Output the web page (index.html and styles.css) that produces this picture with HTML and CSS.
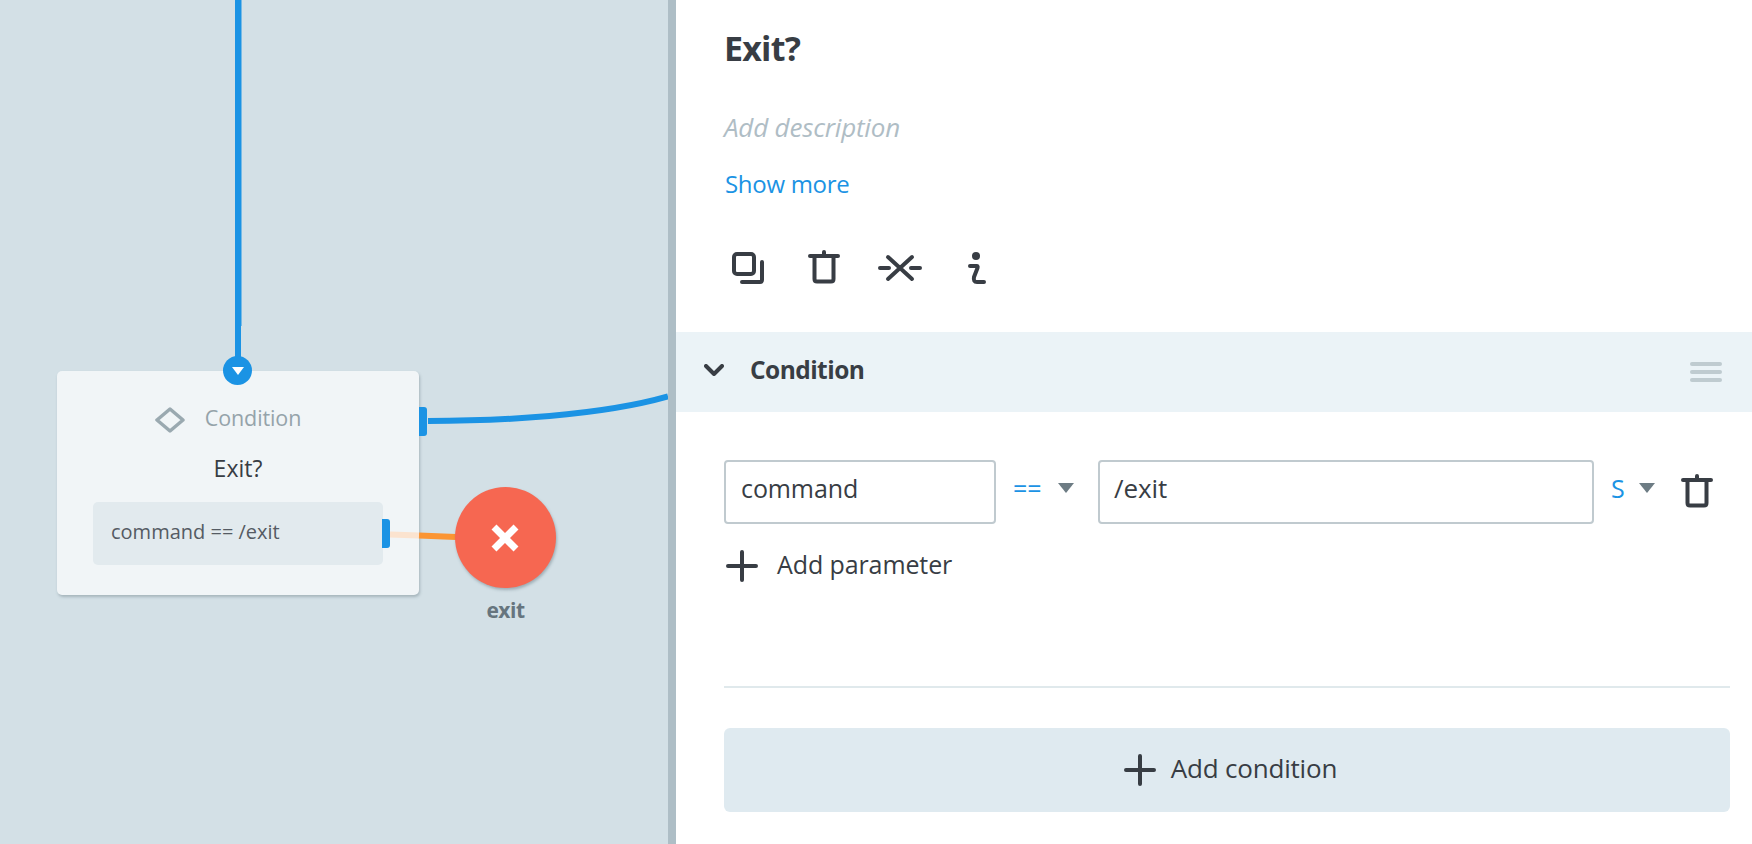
FILE: index.html
```html
<!DOCTYPE html>
<html lang="en">
<head>
<meta charset="utf-8">
<title>Exit?</title>
<link rel="stylesheet" href="styles.css">
</head>
<body>
<div class="app">
  <div class="canvas">
    <div class="node">
      <div class="node-type">
        <svg class="diamond" width="30" height="26" viewBox="0 0 30 26"><path d="M15 2L28 13L15 24L2 13Z"/></svg>
        <span class="node-type-label">Condition</span>
      </div>
      <div class="node-title">Exit?</div>
      <div class="node-row">command == /exit<span class="port port-row"></span></div>
      <span class="port-in"><svg width="12" height="8" viewBox="0 0 12 8"><path d="M0 0H12L6 8Z"/></svg></span>
      <span class="port port-out"></span>
    </div>
    <svg class="wires" width="668" height="844" viewBox="0 0 668 844">
      <path class="wire" d="M238 0V358"/>
      <path class="wire-edge" d="M241.500 0V326"/>
      <path class="wire" d="M428 421C500 421 600 416 668 396.500"/>
      <path class="wire-pale" d="M390 534.500L419 535.500"/>
      <path class="wire-orange" d="M419 535.500L456 537"/>
    </svg>
    <div class="exit-node">
      <div class="exit-circle">
        <svg width="28" height="28" viewBox="0 0 28 28"><path d="M3 3L25 25M25 3L3 25"/></svg>
      </div>
      <div class="exit-label">exit</div>
    </div>
  </div>
  <div class="divider"></div>
  <main class="panel">
    <header class="head">
      <h1 class="title">Exit?</h1>
      <div class="desc">Add description</div>
      <a class="more">Show more</a>
      <div class="tools">
        <svg class="tool tool-copy" width="32" height="32" viewBox="0 0 32 32"><rect x="2" y="2" width="20" height="20" rx="3"/><path d="M30 10V28Q30 30 28 30H10"/></svg>
        <svg class="tool tool-trash" width="32" height="34" viewBox="0 0 32 34"><path d="M2 6H30M16 2V6M6.500 6V29Q6.500 31.500 9 31.500H23Q25.500 31.500 25.500 29V6"/></svg>
        <svg class="tool tool-cut" width="44" height="28" viewBox="0 0 44 28"><path d="M2 14H11M33 14H42M10 3L34 25M34 3L10 25"/></svg>
        <svg class="tool tool-info" width="18" height="32" viewBox="0 0 18 32"><circle class="dot" cx="8" cy="4" r="4"/><path d="M2 14H9Q10 14 9.500 16L6 25Q5 30 9 30H16"/></svg>
      </div>
    </header>
    <section class="band">
      <svg class="chevron" width="20" height="12" viewBox="0 0 20 12"><path d="M2 2L10 10L18 2"/></svg>
      <span class="band-label">Condition</span>
      <span class="burger"><i></i><i></i><i></i></span>
    </section>
    <section class="body">
      <div class="cond-row">
        <div class="field field-a">command</div>
        <div class="op">==</div>
        <span class="caret caret-op"></span>
        <div class="field field-b">/exit</div>
        <div class="type">S</div>
        <span class="caret caret-type"></span>
        <svg class="tool row-trash" width="32" height="34" viewBox="0 0 32 34"><path d="M2 6H30M16 2V6M6.500 6V29Q6.500 31.500 9 31.500H23Q25.500 31.500 25.500 29V6"/></svg>
      </div>
      <div class="add-param">
        <svg class="plus" width="32" height="32" viewBox="0 0 32 32"><path d="M2 16H30M16 2V30"/></svg>
        <span class="add-label">Add parameter</span>
      </div>
      <div class="rule"></div>
      <div class="add-cond">
        <svg class="plus" width="32" height="32" viewBox="0 0 32 32"><path d="M2 16H30M16 2V30"/></svg>
        <span class="add-label">Add condition</span>
      </div>
    </section>
  </main>
</div>
</body>
</html>
```

FILE: styles.css
```css
* { box-sizing: border-box; }
html, body { margin: 0; height: 100%; }
body { font-family: "Open Sans", "Liberation Sans", sans-serif; color: #383d44; background: #fff; overflow: hidden; }
.app { display: flex; width: 1752px; height: 844px; }

.canvas { position: relative; width: 668px; flex: none; background: #d3e0e6; overflow: hidden; }
.wires { position: absolute; left: 0; top: 0; z-index: 1; }
.wires path { fill: none; }
.wire { stroke: #1b93e4; stroke-width: 6; }
.wire-edge { stroke: #1b93e4; stroke-width: 1; opacity: .5; }
.wire-pale { stroke: #fbe3cf; stroke-width: 6; }
.wire-orange { stroke: #fb9533; stroke-width: 6; }

.node { position: absolute; left: 57px; top: 371px; width: 362px; height: 224px; background: #f1f5f7; border-radius: 5px; box-shadow: 1px 2px 3px rgba(80, 100, 110, .35); display: flex; flex-direction: column; align-items: center; padding-top: 36px; }
.node-type { display: flex; align-items: center; gap: 20px; height: 26px; padding-right: 20px; color: #95a3aa; font-size: 21.500px; letter-spacing: -.1px; }
.node-type-label { margin-bottom: 6px; }
.diamond path { fill: none; stroke: #9aa9b0; stroke-width: 3.5; stroke-linejoin: round; }
.node-title { margin-top: 21px; margin-bottom: 1px; font-size: 23px; line-height: 28px; }
.node-row { position: relative; margin-top: 19px; width: 290px; height: 63px; padding: 0 0 0 18px; background: #e2eaee; border-radius: 5px; font-size: 20px; line-height: 60px; color: #555b63; }
.port { position: absolute; z-index: 2; display: block; width: 8px; height: 29px; background: #1b93e4; border-radius: 0 3px 3px 0; }
.port-row { left: 289px; top: 17px; }
.port-out { left: 362px; top: 36px; }
.port-in { position: absolute; z-index: 2; left: 166px; top: -15px; width: 29px; height: 29px; border-radius: 50%; background: #1b93e4; display: flex; align-items: center; justify-content: center; }
.port-in path { fill: #fff; }

.exit-node { position: absolute; z-index: 2; left: 455px; top: 487px; width: 101px; display: flex; flex-direction: column; align-items: center; }
.exit-circle { width: 101px; height: 101px; border-radius: 50%; background: #f66751; box-shadow: 1px 2px 3px rgba(80, 100, 110, .4); display: flex; align-items: center; justify-content: center; }
.exit-circle svg { margin-right: 1px; }
.exit-circle path { fill: none; stroke: #fff; stroke-width: 7; }
.exit-label { margin-top: 8px; font-size: 21px; line-height: 28px; font-weight: 700; color: #66757e; letter-spacing: -.5px; }

.divider { width: 8px; flex: none; background: #aebec6; }

.panel { flex: 1; min-width: 0; background: #fff; display: flex; flex-direction: column; }
.head { padding: 23px 0 0 48px; height: 332px; flex: none; display: flex; flex-direction: column; align-items: flex-start; }
.title { margin: 0; font-size: 34px; line-height: 50px; font-weight: 700; letter-spacing: -.8px; color: #383d44; }
.desc { margin-top: 36px; font-size: 26px; line-height: 36px; font-style: italic; color: #afbdc5; letter-spacing: -.2px; }
.more { margin-top: 21px; margin-left: 1px; font-size: 24px; line-height: 36px; color: #1b93e4; letter-spacing: -.3px; }
.tools { position: relative; display: flex; align-items: flex-start; margin-top: 50px; margin-left: 8px; }
.tool path, .tool rect { fill: none; stroke: #383d44; stroke-width: 4; stroke-linecap: round; stroke-linejoin: round; }
.tool .dot { fill: #383d44; }
.tool-trash { margin-left: 44px; margin-top: -2px; }
.tool-cut { margin-left: 38px; margin-top: 2px; }
.tool-info { margin-left: 46px; }

.band { height: 80px; flex: none; background: #ebf3f7; display: flex; align-items: center; padding: 0 30px 4px 28px; }
.chevron path { fill: none; stroke: #383d44; stroke-width: 4; stroke-linecap: round; stroke-linejoin: round; }
.band-label { margin-left: 26px; margin-bottom: 2px; font-size: 24.500px; font-weight: 700; letter-spacing: -.55px; }
.burger { margin-left: auto; margin-top: 4px; display: flex; flex-direction: column; gap: 4px; }
.burger i { display: block; width: 32px; height: 4px; border-radius: 2px; background: #bfcbd0; }

.body { flex: 1; padding: 48px 22px 0 48px; }
.cond-row { display: flex; align-items: flex-start; height: 64px; }
.field { height: 64px; border: 2px solid #c0cacf; border-radius: 4px; padding-left: 15px; font-size: 25px; line-height: 53px; letter-spacing: -.1px; }
.field-a { width: 272px; }
.field-b { width: 496px; margin-left: 24px; padding-left: 14px; font-size: 26px; }
.op { margin-left: 17px; width: 28px; font-size: 25px; line-height: 56px; color: #1b93e4; letter-spacing: 0; }
.caret { margin-top: 23px; width: 0; height: 0; border-left: 8px solid transparent; border-right: 8px solid transparent; border-top: 10px solid #6d7c84; }
.caret-op { margin-left: 17px; }
.type { margin-left: 17px; width: 14px; font-size: 25px; line-height: 56px; color: #1b93e4; }
.caret-type { margin-left: 14px; }
.row-trash { margin-left: 26px; margin-top: 14px; }

.add-param { display: flex; align-items: center; gap: 19px; margin-top: 26px; height: 32px; padding-left: 2px; font-size: 25px; letter-spacing: -.1px; }
.add-label { margin-bottom: 5px; }
.plus path { fill: none; stroke: #383d44; stroke-width: 4; stroke-linecap: round; }
.rule { margin-top: 104px; height: 2px; background: #e0e9ec; }
.add-cond { margin-top: 40px; height: 84px; padding-left: 7px; background: #dfeaf0; border-radius: 6px; display: flex; align-items: center; justify-content: center; gap: 15px; font-size: 26px; letter-spacing: -.2px; }
```
